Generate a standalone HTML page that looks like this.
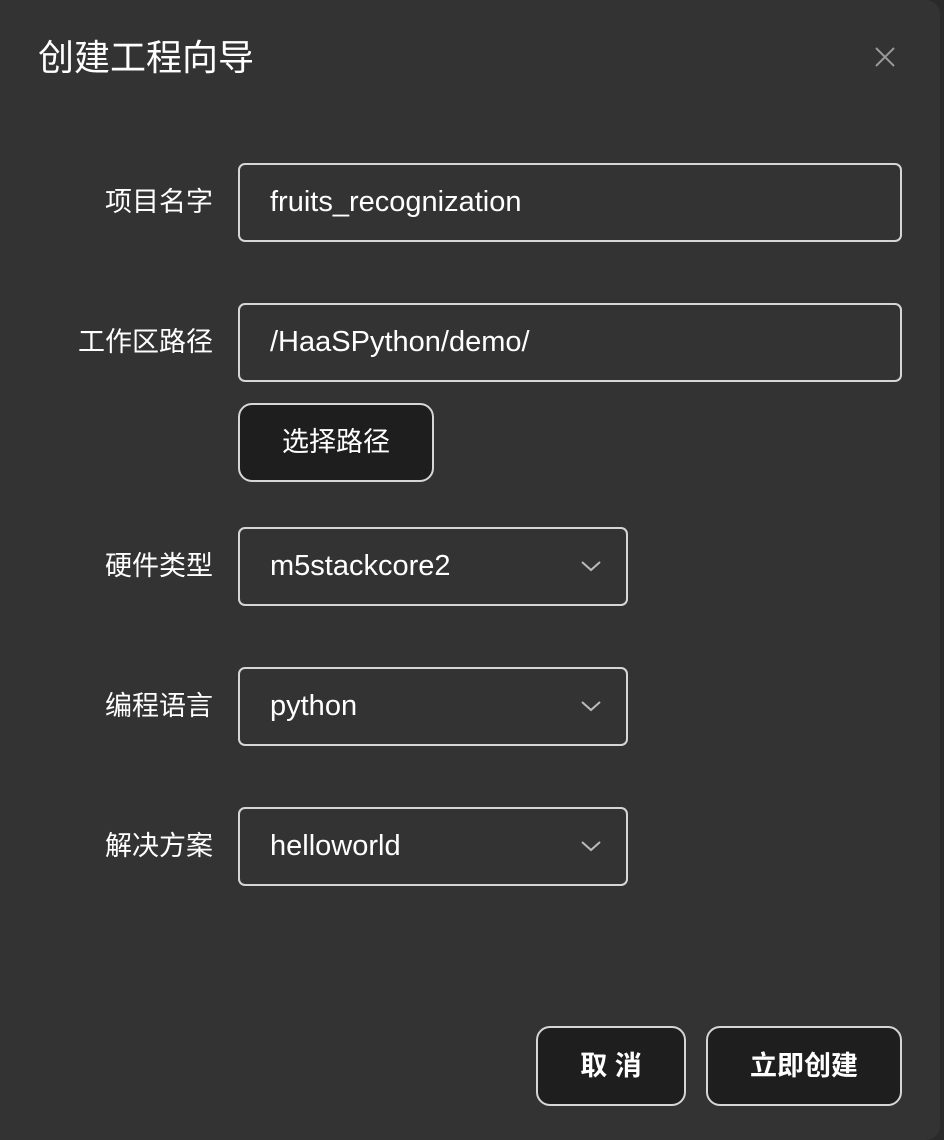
<!DOCTYPE html>
<html><head><meta charset="utf-8"><style>
body{margin:0;width:944px;height:1140px;background:#2a2a2a;overflow:hidden;font-family:"Liberation Sans","Noto Sans CJK SC",sans-serif;color:#fff}
.dlg{position:absolute;left:0;top:0;width:940px;height:1140px;background:#333;border-radius:0 14px 14px 0}
.t{position:absolute;left:38px;top:34px;font-size:36px;line-height:48px}
.x{position:absolute;left:872px;top:44px}
.l{position:absolute;right:727px;font-size:27px;line-height:38px;text-align:right;white-space:nowrap}
.in{position:absolute;left:238px;height:79px;border:2px solid #d6d6d6;border-radius:7px;box-sizing:border-box;font-size:29px;line-height:75px;padding-left:30px}
.w{width:664px}.s{width:390px}
.ch{position:absolute;right:24px;top:30px}
.b{position:absolute;background:#1e1e1e;border:2px solid #d6d6d6;border-radius:14px;box-sizing:border-box;font-size:27px;text-align:center}
</style></head><body>
<div class="dlg">
<div class="t">创建工程向导</div>
<svg class="x" width="26" height="26" viewBox="0 0 26 26"><path d="M4 4L22 22M22 4L4 22" stroke="#9a9a9a" stroke-width="2"/></svg>
<div class="l" style="top:183px">项目名字</div>
<div class="in w" style="top:163px">fruits_recognization</div>
<div class="l" style="top:323px">工作区路径</div>
<div class="in w" style="top:303px">/HaaSPython/demo/</div>
<div class="b" style="left:238px;top:403px;width:196px;height:79px;line-height:75px">选择路径</div>
<div class="l" style="top:547px">硬件类型</div>
<div class="in s" style="top:527px">m5stackcore2<svg class="ch" width="22" height="14" viewBox="0 0 22 14"><path d="M2 3L11 11L20 3" stroke="#bbb" stroke-width="2" fill="none"/></svg></div>
<div class="l" style="top:687px">编程语言</div>
<div class="in s" style="top:667px">python<svg class="ch" width="22" height="14" viewBox="0 0 22 14"><path d="M2 3L11 11L20 3" stroke="#bbb" stroke-width="2" fill="none"/></svg></div>
<div class="l" style="top:827px">解决方案</div>
<div class="in s" style="top:807px">helloworld<svg class="ch" width="22" height="14" viewBox="0 0 22 14"><path d="M2 3L11 11L20 3" stroke="#bbb" stroke-width="2" fill="none"/></svg></div>
<div class="b" style="left:536px;top:1026px;width:150px;height:80px;line-height:76px;font-weight:bold">取 消</div>
<div class="b" style="left:706px;top:1026px;width:196px;height:80px;line-height:76px;font-weight:bold">立即创建</div>
</div>
</body></html>
